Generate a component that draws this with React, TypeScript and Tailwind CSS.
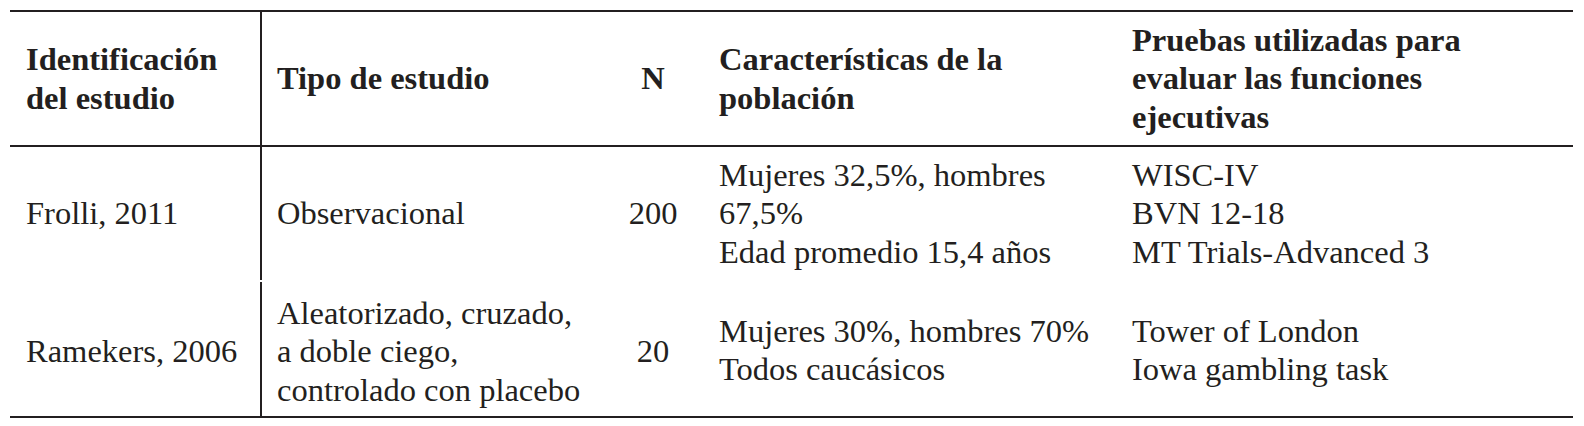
import React from "react";

const cell = "flex items-center";

export default function App() {
  return (
    <div
      className="w-[1584px] h-[426px] bg-white pt-[10px] pl-[10px] text-[#231f20]"
      style={{ fontFamily: '"Liberation Serif", "Times New Roman", serif' }}
    >
      <div className="w-[1563px] border-t-2 border-b-2 border-[#231f20] text-[32.5px] leading-[38.5px]">
        {/* header */}
        <div className="flex h-[135px] border-b-2 border-[#231f20] font-bold">
          <div className={`${cell} w-[252px] border-r-2 border-[#231f20] pl-[16px]`}>
            <div>
              Identificación
              <br />
              del estudio
            </div>
          </div>
          <div className={`${cell} w-[338px] pl-[15px]`}>Tipo de estudio</div>
          <div className={`${cell} w-[106px] justify-center`}>N</div>
          <div className={`${cell} w-[413px] pl-[13px]`}>
            <div>
              Características de la
              <br />
              población
            </div>
          </div>
          <div className={`${cell} flex-1 pl-[13px]`}>
            <div>
              Pruebas utilizadas para
              <br />
              evaluar las funciones
              <br />
              ejecutivas
            </div>
          </div>
        </div>
        {/* row 1 */}
        <div className="flex h-[133px]">
          <div className={`${cell} w-[252px] border-r-2 border-[#231f20] pl-[16px]`}>Frolli, 2011</div>
          <div className={`${cell} w-[338px] pl-[15px]`}>Observacional</div>
          <div className={`${cell} w-[106px] justify-center`}>200</div>
          <div className={`${cell} w-[413px] pl-[13px]`}>
            <div>
              Mujeres 32,5%, hombres
              <br />
              67,5%
              <br />
              Edad promedio 15,4 años
            </div>
          </div>
          <div className={`${cell} flex-1 pl-[13px]`}>
            <div>
              WISC-IV
              <br />
              BVN 12-18
              <br />
              MT Trials-Advanced 3
            </div>
          </div>
        </div>
        {/* row 2 */}
        <div className="flex h-[136px]">
          <div className={`${cell} w-[252px] mt-[2px] border-r-2 border-[#231f20] pl-[16px] pt-[5px]`}>
            Ramekers, 2006
          </div>
          <div className={`${cell} w-[338px] pl-[15px] pt-[7px]`}>
            <div>
              Aleatorizado, cruzado,
              <br />
              a doble ciego,
              <br />
              controlado con placebo
            </div>
          </div>
          <div className={`${cell} w-[106px] justify-center pt-[7px]`}>20</div>
          <div className={`${cell} w-[413px] pl-[13px] pt-[4px]`}>
            <div>
              Mujeres 30%, hombres 70%
              <br />
              Todos caucásicos
            </div>
          </div>
          <div className={`${cell} flex-1 pl-[13px] pt-[4px]`}>
            <div>
              Tower of London
              <br />
              Iowa gambling task
            </div>
          </div>
        </div>
      </div>
    </div>
  );
}
